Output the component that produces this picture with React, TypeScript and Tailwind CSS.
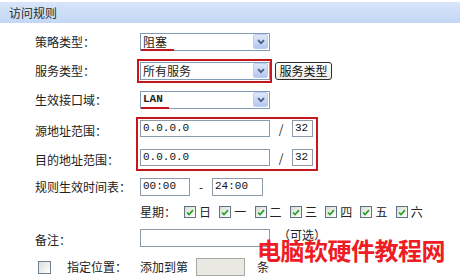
import React from "react";

const cjk = "font-['Noto_Sans_CJK_SC',sans-serif]";
const mono = "font-['Liberation_Mono',monospace]";

function Arrow() {
  return (
    <span className="ml-auto mr-[1px] flex h-[15px] w-[15px] items-center justify-center rounded-[2px] border border-[#bccdf0] bg-gradient-to-b from-[#dfe8fa] to-[#b4c8ef]">
      <svg width="8" height="6" viewBox="0 0 8 6">
        <path d="M1 1.2 L4 4.2 L7 1.2" fill="none" stroke="#4a5f86" strokeWidth="1.8" />
      </svg>
    </span>
  );
}

function Select({ text, monoText, mark }: { text: string; monoText?: boolean; mark?: number }) {
  return (
    <div className="relative flex h-[18px] w-[130px] items-center border border-[#7f9db9] bg-white">
      <span className={`pl-[2px] leading-none ${monoText ? `${mono} text-[11px] font-bold` : "text-[12px]"}`}>{text}</span>
      {mark ? <span className="absolute left-[0px] top-[15px] h-[2px] bg-[#c8161d]" style={{ width: mark }} /> : null}
      <Arrow />
    </div>
  );
}

function Field({ value, w, h = 17, gray }: { value?: string; w: number; h?: number; gray?: boolean }) {
  return (
    <div
      className={`flex items-center border pl-[2px] ${mono} text-[11px] leading-none text-[#111] ${gray ? "border-[#a9a9a4] bg-[#e9e8e3]" : "border-[#8d9aa8] bg-white"}`}
      style={{ width: w, height: h }}
    >
      {value}
    </div>
  );
}

function Check({ on }: { on?: boolean }) {
  return (
    <span className="flex h-[12px] w-[12px] items-center justify-center border border-[#5e7384] bg-gradient-to-br from-[#d8dcd6] to-[#ffffff]">
      {on ? (
        <svg width="8" height="7" viewBox="0 0 8 7">
          <path d="M1 3.5 L3 5.5 L7 1.2" fill="none" stroke="#24a324" strokeWidth="1.7" />
        </svg>
      ) : null}
    </span>
  );
}

function Label({ children }: { children: React.ReactNode }) {
  return <div className="w-[140px] shrink-0 pl-[35px] text-[12px] leading-none">{children}</div>;
}

export default function App() {
  const days = ["日", "一", "二", "三", "四", "五", "六"];
  return (
    <div className={`relative h-[280px] w-[460px] overflow-hidden bg-white ${cjk} text-[#222]`}>
      <div className="mt-[2px] flex h-[21px] items-center bg-gradient-to-b from-[#d8e5f9] to-[#c3d7f5] pl-[9px] text-[12px] text-[#2c2c2c]">
        访问规则
      </div>

      <div className="mt-[4px] flex h-[29px] items-center">
        <Label>策略类型：</Label>
        <Select text="阻塞" mark={33} />
      </div>

      <div className="flex h-[29px] items-center">
        <Label>服务类型：</Label>
        <div className="ml-[-3px] border-2 border-[#c8161d] py-[1px] pl-[1px]">
          <Select text="所有服务" />
        </div>
        <button className="ml-[3px] flex h-[18px] w-[57px] items-center justify-center rounded-[3px] border border-[#2b2b2b] bg-gradient-to-b from-white to-[#ecebe6] text-[12px] leading-none text-[#111]">
          服务类型
        </button>
      </div>

      <div className="flex h-[29px] items-center">
        <Label>生效接口域：</Label>
        <Select text="LAN" monoText mark={28} />
      </div>

      <div className="mt-[3px] flex">
        <div className="flex w-[136px] shrink-0 flex-col pl-[35px] pt-[8px] text-[12px] leading-none">
          <div>源地址范围：</div>
          <div className="mt-[17px]">目的地址范围：</div>
        </div>
        <div className="flex flex-col gap-[12px] border-2 border-[#c8161d] pb-[3px] pl-[2px] pr-[3px] pt-[1px]">
          {[0, 1].map((i) => (
            <div key={i} className="flex items-center">
              <Field value="0.0.0.0" w={130} />
              <span className="w-[22px] text-center text-[12px] leading-none">/</span>
              <Field value="32" w={21} />
            </div>
          ))}
        </div>
      </div>

      <div className="mt-[3px] flex h-[25px] items-center">
        <Label>规则生效时间表：</Label>
        <Field value="00:00" w={50} h={18} />
        <span className="w-[22px] text-center text-[12px] leading-none">-</span>
        <Field value="24:00" w={51} h={18} />
      </div>

      <div className="flex h-[26px] items-center">
        <div className="w-[140px] shrink-0" />
        <span className="w-[44px] text-[12px] leading-none">星期：</span>
        {days.map((d) => (
          <span key={d} className="flex w-[35.3px] items-center gap-[3px] text-[12px] leading-none">
            <Check on />
            {d}
          </span>
        ))}
      </div>

      <div className="flex h-[29px] items-center">
        <Label>备注：</Label>
        <div className="mt-[-4px]">
          <Field w={130} h={18} />
        </div>
        <span className="ml-[8px] mt-[-10px] text-[12px] leading-none">（可选）</span>
      </div>

      <div className="flex h-[26px] items-center">
        <div className="flex w-[140px] shrink-0 items-center pl-[38px] text-[12px] leading-none">
          <span className="flex h-[13px] w-[13px] border border-[#6c7e8f] bg-gradient-to-br from-[#dcdfda] to-white" />
          <span className="ml-[16px]">指定位置：</span>
        </div>
        <span className="text-[12px] leading-none">添加到第</span>
        <div className="ml-[8px]">
          <Field w={49} h={18} gray />
        </div>
        <span className="ml-[12px] text-[12px] leading-none">条</span>
      </div>

      <div className="absolute left-[257px] top-[238px] text-[24px] font-bold leading-none tracking-[-0.5px] text-[#ee1c25]">
        电脑软硬件教程网
      </div>
    </div>
  );
}
